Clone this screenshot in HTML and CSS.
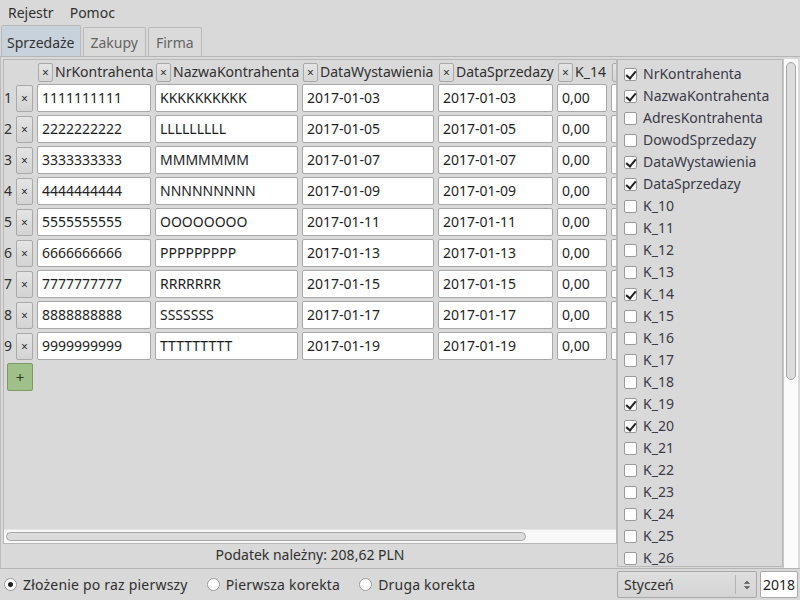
FILE: index.html
```html
<!DOCTYPE html>
<html>
<head>
<meta charset="utf-8">
<link rel="stylesheet" href="styles.css">
</head>
<body>
<div class="app">
  <div class="menubar"><span class="menu">Rejestr</span><span class="menu">Pomoc</span></div>
  <div class="tabs">
    <div class="tab active">Sprzedaże</div>
    <div class="tab">Zakupy</div>
    <div class="tab">Firma</div>
  </div>
  <div class="pane">
    <div class="left">
      <div class="tableframe">
        <div class="scrollarea">
          <div class="grid">
            <div class="hnum"></div><div class="hdel"></div>
            <div class="hcell c1"><span class="xbtn">×</span><span class="hl">NrKontrahenta</span></div>
            <div class="hcell c2"><span class="xbtn">×</span><span class="hl">NazwaKontrahenta</span></div>
            <div class="hcell c3"><span class="xbtn">×</span><span class="hl">DataWystawienia</span></div>
            <div class="hcell c4"><span class="xbtn">×</span><span class="hl">DataSprzedazy</span></div>
            <div class="hcell c5"><span class="xbtn">×</span><span class="hl">K_14</span></div>
            <div class="hcell c6"><span class="xbtn">×</span><span class="hl">K_19</span></div>

            <div class="num">1</div><div class="rdel">×</div><div class="inp">1111111111</div><div class="inp">KKKKKKKKKK</div><div class="inp">2017-01-03</div><div class="inp">2017-01-03</div><div class="inp">0,00</div><div class="inp">0,00</div>
            <div class="num">2</div><div class="rdel">×</div><div class="inp">2222222222</div><div class="inp">LLLLLLLLL</div><div class="inp">2017-01-05</div><div class="inp">2017-01-05</div><div class="inp">0,00</div><div class="inp">0,00</div>
            <div class="num">3</div><div class="rdel">×</div><div class="inp">3333333333</div><div class="inp">MMMMMMM</div><div class="inp">2017-01-07</div><div class="inp">2017-01-07</div><div class="inp">0,00</div><div class="inp">0,00</div>
            <div class="num">4</div><div class="rdel">×</div><div class="inp">4444444444</div><div class="inp">NNNNNNNNN</div><div class="inp">2017-01-09</div><div class="inp">2017-01-09</div><div class="inp">0,00</div><div class="inp">0,00</div>
            <div class="num">5</div><div class="rdel">×</div><div class="inp">5555555555</div><div class="inp">OOOOOOOO</div><div class="inp">2017-01-11</div><div class="inp">2017-01-11</div><div class="inp">0,00</div><div class="inp">0,00</div>
            <div class="num">6</div><div class="rdel">×</div><div class="inp">6666666666</div><div class="inp">PPPPPPPPP</div><div class="inp">2017-01-13</div><div class="inp">2017-01-13</div><div class="inp">0,00</div><div class="inp">0,00</div>
            <div class="num">7</div><div class="rdel">×</div><div class="inp">7777777777</div><div class="inp">RRRRRRR</div><div class="inp">2017-01-15</div><div class="inp">2017-01-15</div><div class="inp">0,00</div><div class="inp">0,00</div>
            <div class="num">8</div><div class="rdel">×</div><div class="inp">8888888888</div><div class="inp">SSSSSSS</div><div class="inp">2017-01-17</div><div class="inp">2017-01-17</div><div class="inp">0,00</div><div class="inp">0,00</div>
            <div class="num">9</div><div class="rdel">×</div><div class="inp">9999999999</div><div class="inp">TTTTTTTTT</div><div class="inp">2017-01-19</div><div class="inp">2017-01-19</div><div class="inp">0,00</div><div class="inp">0,00</div>
          </div>
          <div class="addrow"><span class="addbtn">+</span></div>
        </div>
        <div class="hscroll"><div class="hhandle"></div></div>
      </div>
      <div class="total">Podatek należny: 208,62 PLN</div>
    </div>
    <div class="right">
      <div class="list">
        <div class="item"><span class="cb on"></span>NrKontrahenta</div>
        <div class="item"><span class="cb on"></span>NazwaKontrahenta</div>
        <div class="item"><span class="cb"></span>AdresKontrahenta</div>
        <div class="item"><span class="cb"></span>DowodSprzedazy</div>
        <div class="item"><span class="cb on"></span>DataWystawienia</div>
        <div class="item"><span class="cb on"></span>DataSprzedazy</div>
        <div class="item"><span class="cb"></span>K_10</div>
        <div class="item"><span class="cb"></span>K_11</div>
        <div class="item"><span class="cb"></span>K_12</div>
        <div class="item"><span class="cb"></span>K_13</div>
        <div class="item"><span class="cb on"></span>K_14</div>
        <div class="item"><span class="cb"></span>K_15</div>
        <div class="item"><span class="cb"></span>K_16</div>
        <div class="item"><span class="cb"></span>K_17</div>
        <div class="item"><span class="cb"></span>K_18</div>
        <div class="item"><span class="cb on"></span>K_19</div>
        <div class="item"><span class="cb on"></span>K_20</div>
        <div class="item"><span class="cb"></span>K_21</div>
        <div class="item"><span class="cb"></span>K_22</div>
        <div class="item"><span class="cb"></span>K_23</div>
        <div class="item"><span class="cb"></span>K_24</div>
        <div class="item"><span class="cb"></span>K_25</div>
        <div class="item"><span class="cb"></span>K_26</div>
      </div>
      <div class="vscroll"><div class="vhandle"></div></div>
    </div>
  </div>
  <div class="bottom">
    <label class="radio"><span class="rb on"></span>Złożenie po raz pierwszy</label>
    <label class="radio"><span class="rb"></span>Pierwsza korekta</label>
    <label class="radio"><span class="rb"></span>Druga korekta</label>
    <div class="spacer"></div>
    <div class="combo"><span class="ctext">Styczeń</span><span class="csep"></span><span class="carrows"><svg width="8" height="14" viewBox="0 0 8 14"><path d="M1.5 5.5 L4 3 L6.5 5.5 Z" fill="#666" stroke="#666" stroke-width="0.8"/><path d="M1.5 8.5 L4 11 L6.5 8.5 Z" fill="#666" stroke="#666" stroke-width="0.8"/></svg></span></div>
    <div class="spin">2018</div>
  </div>
</div>
</body>
</html>
```

FILE: styles.css
```css
* { box-sizing: border-box; }
html, body { margin: 0; padding: 0; }
body {
  width: 800px; height: 600px; overflow: hidden;
  background: #d9d9d9;
  font-family: "Noto Sans", Roboto, sans-serif;
  font-size: 14px;
  line-height: 20px;
  color: #303030;
}
.app { width: 800px; height: 600px; display: flex; flex-direction: column; }

.menubar { height: 25px; display: flex; align-items: center; padding-left: 8px; gap: 16px; }
.menu { line-height: 25px; }

.tabs { height: 31px; display: flex; align-items: flex-end; padding-left: 1px; gap: 2px; }
.tab {
  height: 29px; padding: 0 7px; line-height: 29px;
  border: 1px solid #b9b9b9; border-bottom: none;
  border-radius: 2px 2px 0 0;
  color: #646464;
  background: #dadada;
}
.tab.active { height: 31px; background: #c8d2dc; color: #333; padding: 0 5px; line-height: 33px; }

.pane {
  height: 513px;
  border-top: 1px solid #b5b5b5;
  border-bottom: 1px solid #b5b5b5;
  border-left: 1px solid #bcbcbc;
  padding: 2px 2px 2px 2px;
  display: flex;
}
.left { width: 614px; display: flex; flex-direction: column; }
.tableframe {
  height: 488px;
  border: 1px solid #b8b8b8;
  display: flex; flex-direction: column;
}
.scrollarea { flex: 1; overflow: hidden; padding: 3px 0 0 0; }
.grid {
  display: grid;
  grid-template-columns: 8px 17px 114px 143px 132px 115px 50px 50px;
  grid-template-rows: 18px repeat(9, 28px);
  column-gap: 4px; row-gap: 3px;
  width: max-content;
}
.hcell { display: flex; align-items: center; gap: 2px; white-space: nowrap; padding-left: 1px; }
.xbtn {
  width: 15px; height: 19px; flex: none;
  border: 1px solid #a9a9a9; border-radius: 2px;
  background: linear-gradient(#e4e4e4, #d6d6d6);
  font-size: 12px; line-height: 17px; text-align: center; color: #333;
}
.hl { color: #303030; }
.num { text-align: right; line-height: 28px; }
.rdel {
  height: 27px; margin-top: 1px;
  border: 1px solid #a9a9a9; border-radius: 2px;
  background: linear-gradient(#e4e4e4, #d3d3d3);
  font-size: 12px; line-height: 25px; text-align: center; color: #333;
}
.inp {
  background: #fff; border: 1px solid #a8a8a8; border-radius: 2px;
  padding-left: 4px; line-height: 26px; white-space: nowrap; overflow: hidden;
  color: #1e1e1e;
}
.addrow { padding: 3px 0 0 3px; }
.addbtn {
  display: block; width: 26px; height: 28px;
  background: #9fc088; border: 1px solid #7c9a66; border-radius: 2px;
  text-align: center; line-height: 26px; font-size: 15px; color: #2e3a28;
}
.hscroll {
  height: 14px; background: #f8f8f8; border-top: 1px solid #e4e4e4;
  padding: 2px 0 0 2px;
}
.hhandle {
  width: 520px; height: 9px; background: #dcdcdc;
  border: 1px solid #a6a6a6; border-radius: 5px;
}
.total { height: 22px; text-align: center; line-height: 22px; }

.right { width: 181px; display: flex; }
.list {
  width: 166px; height: 508px;
  border: 1px solid #b8b8b8;
  padding: 3px 0 0 6px;
  overflow: hidden;
}
.item { height: 22px; display: flex; align-items: center; white-space: nowrap; color: #3a3a48; }
.cb {
  width: 13px; height: 13px; flex: none; margin-right: 6px;
  background: #fff; border: 1px solid #9a9a9a; border-radius: 2px;
  position: relative;
}
.cb.on::after {
  content: ""; position: absolute; left: 3px; top: 0px;
  width: 4px; height: 8px;
  border-right: 2px solid #222; border-bottom: 2px solid #222;
  transform: rotate(40deg);
}
.vscroll {
  width: 15px; height: 509px; background: #fbfbfb; padding: 3px 2px 0 2px;
  border-left: 1px solid #c8c8c8;
}
.vhandle {
  width: 10px; height: 318px; background: #dcdcdc;
  border: 1px solid #a6a6a6; border-radius: 5px;
}

.bottom { flex: 1; display: flex; align-items: center; padding-left: 4px; }
.radio { display: flex; align-items: center; margin-right: 19px; white-space: nowrap; letter-spacing: 0.2px; }
.rb {
  width: 13px; height: 13px; border-radius: 50%; background: #fff;
  border: 1px solid #9a9a9a; margin-right: 6px; position: relative; flex: none;
}
.rb.on::after {
  content: ""; position: absolute; left: 3px; top: 3px; width: 5px; height: 5px;
  border-radius: 50%; background: #222;
}
.spacer { flex: 1; }
.combo {
  width: 140px; height: 27px; margin-right: 3px;
  border: 1px solid #a8a8a8; border-radius: 2px;
  background: linear-gradient(#dedede, #d4d4d4);
  display: flex; align-items: center; padding-left: 6px;
}
.ctext { flex: 1; }
.csep { width: 1px; height: 19px; background: #b4b4b4; margin-right: 7px; }
.carrows { width: 13px; display: flex; align-items: center; }
.spin {
  width: 38px; height: 27px; margin-right: 2px; background: #fff;
  border: 1px solid #a8a8a8; border-radius: 2px;
  padding-left: 2px; line-height: 25px; color: #1e1e1e;
}
```
